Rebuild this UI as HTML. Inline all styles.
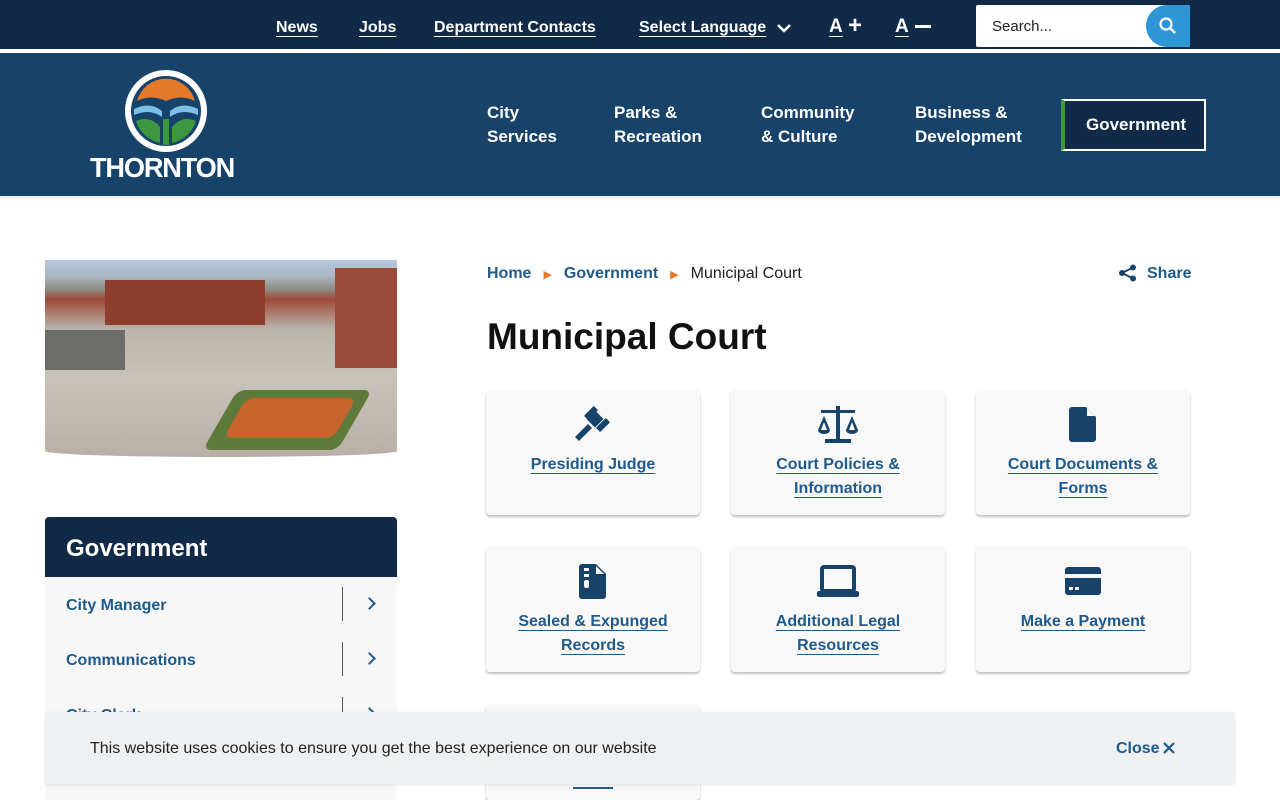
<!DOCTYPE html>
<html><head><style>
*{margin:0;padding:0;box-sizing:border-box}
html,body{width:1280px;height:800px;overflow:hidden}
body{font-family:"Liberation Sans",sans-serif;background:#fff;position:relative}
a{color:inherit}
.top{position:absolute;left:0;top:0;width:1280px;height:51px;background:#112a48;border-bottom:2px solid #fff}
.top a{position:absolute;top:19px;color:#fff;font-weight:bold;font-size:16px;text-decoration:underline;text-underline-offset:4px}
.hdr{position:absolute;left:0;top:53px;width:1280px;height:143px;background:#17426a}
.nav{position:absolute;color:#fff;font-weight:bold;font-size:17px;line-height:24px}
.card{position:absolute;width:214px;height:125px;background:#f8f8f9;border-radius:4px;box-shadow:0 2px 2px rgba(0,0,0,.25);text-align:center;color:#1f5a8c;font-size:16px;font-weight:bold;line-height:24px}
.card svg{display:block;margin:14px auto 9px}
.card span{text-decoration:underline;text-underline-offset:4px}
.side{position:absolute;left:45px;width:352px;height:55px;background:#f7f7f7}
.side a{position:absolute;left:21px;top:20px;color:#1f5a8c;font-weight:bold;font-size:16px;text-underline-offset:4px}
.side i{position:absolute;left:297px;top:10px;width:1px;height:34px;background:#555}
.side b{position:absolute;left:320px;top:22px;width:9px;height:9px;border-top:2px solid #1f5a8c;border-right:2px solid #1f5a8c;transform:rotate(45deg)}
</style></head><body>
<div class="top">
<a style="left:276px">News</a><a style="left:359px">Jobs</a><a style="left:434px">Department Contacts</a><a style="left:639px">Select Language</a>
<svg style="position:absolute;left:776px;top:23px" width="16" height="10"><path d="M2 2l6 6 6-6" stroke="#fff" stroke-width="2.5" fill="none"/></svg>
<a style="left:829px;font-size:19px;top:16px">A</a><span style="position:absolute;left:848px;top:12px;color:#fff;font-size:24px;font-weight:bold">+</span>
<a style="left:895px;font-size:19px;top:16px">A</a><span style="position:absolute;left:915px;top:25px;width:16px;height:3px;background:#fff"></span>
<div style="position:absolute;left:976px;top:5px;width:214px;height:42px;background:#fff;border-radius:2px"><span style="position:absolute;left:16px;top:13px;font-size:15px;color:#222">Search...</span>
<div style="position:absolute;right:0;top:0;width:44px;height:42px;background:#2f96d6;border-radius:21px 2px 2px 21px"><svg style="position:absolute;left:13px;top:12px" width="18" height="18"><circle cx="7" cy="7" r="5.5" stroke="#fff" stroke-width="2.2" fill="none"/><path d="M11 11l5 5" stroke="#fff" stroke-width="2.5"/></svg></div></div>
</div>
<div class="hdr">
<svg style="position:absolute;left:124px;top:16px" width="84" height="84" viewBox="0 0 84 84"><circle cx="42" cy="42" r="41" fill="#fff"/><circle cx="42" cy="42" r="35" fill="#17426a"/><path d="M13 32a30 30 0 0 1 58 0q-14-7-29 0q-15-7-29 0z" fill="#e5792a"/><path d="M10 40q16-8 28 2v6q-12-9-28-2zM74 40q-16-8-28 2v6q12-9 28-2z" fill="#7cc0e8"/><path d="M12 52q14-6 24 6v16a32 32 0 0 1-24-22zM72 52q-14-6-24 6v16a32 32 0 0 0 24-22zM39 50h6v26h-6z" fill="#3d9740"/></svg>
<div style="position:absolute;left:90px;top:99px;color:#fff;font-weight:bold;font-size:28px;letter-spacing:-1.2px;transform:scaleX(0.97);transform-origin:left">THORNTON</div>
<div class="nav" style="left:487px;top:48px">City<br>Services</div>
<div class="nav" style="left:614px;top:48px">Parks &amp;<br>Recreation</div>
<div class="nav" style="left:761px;top:48px">Community<br>&amp; Culture</div>
<div class="nav" style="left:915px;top:48px">Business &amp;<br>Development</div>
<div style="position:absolute;left:1061px;top:46px;width:145px;height:52px;border:2px solid #fff;background:#112a48;color:#fff;font-weight:bold;font-size:17px;line-height:48px;padding-left:21px;border-left:4px solid #3d9740">Government</div>
</div>
<div style="position:absolute;left:0;top:196px;width:1280px;height:4px;background:linear-gradient(#e6e6e6,#fff)"></div>
<div style="position:absolute;left:45px;top:260px;width:352px;height:197px;overflow:hidden;background:linear-gradient(180deg,#b7c8de 0,#aab8c5 8%,#8d8a80 15%,#a04a38 20%,#b9b4ac 35%,#c7c2ba 60%,#b8b0a6 100%);border-radius:0 0 50% 50%/0 0 6px 6px">
<div style="position:absolute;left:290px;top:8px;width:62px;height:100px;background:#9a4a38"></div>
<div style="position:absolute;left:60px;top:20px;width:160px;height:45px;background:#8f3d2c"></div>
<div style="position:absolute;left:175px;top:130px;width:135px;height:60px;background:#5e7a3a;border-radius:8px;transform:skewX(-30deg)"></div>
<div style="position:absolute;left:190px;top:138px;width:110px;height:40px;background:#c7642b;border-radius:8px;transform:skewX(-30deg)"></div>
<div style="position:absolute;left:0;top:70px;width:80px;height:40px;background:#6c6c68"></div>
</div>
<div style="position:absolute;left:45px;top:517px;width:352px;height:60px;background:#112a48;border-radius:4px 4px 0 0;color:#fff;font-weight:bold;font-size:24px;line-height:64px;padding-left:21px">Government</div>
<div class="side" style="top:577px"><a>City Manager</a><i></i><b></b></div>
<div class="side" style="top:632px"><a>Communications</a><i></i><b></b></div>
<div class="side" style="top:687px;height:113px"><a>City Clerk</a><i></i><b></b></div>
<div style="position:absolute;left:487px;top:265px;font-size:16px;color:#222"><a style="color:#1f5a8c;font-weight:bold;text-underline-offset:4px">Home</a><span style="color:#e5792a;margin:0 12px;font-size:11px">&#9654;</span><a style="color:#1f5a8c;font-weight:bold;text-underline-offset:4px">Government</a><span style="color:#e5792a;margin:0 12px;font-size:11px">&#9654;</span>Municipal Court</div>
<svg style="position:absolute;left:1118px;top:264px" width="20" height="18"><circle cx="15" cy="3.5" r="3" fill="#17426a"/><circle cx="4" cy="9" r="3" fill="#17426a"/><circle cx="15" cy="14.5" r="3" fill="#17426a"/><path d="M15 3.5L4 9l11 5.5" stroke="#17426a" stroke-width="2" fill="none"/></svg>
<a style="position:absolute;left:1147px;top:265px;color:#1f5a8c;font-weight:bold;font-size:16px;text-underline-offset:4px">Share</a>
<h1 style="position:absolute;left:487px;top:316px;font-size:37px;color:#111">Municipal Court</h1>
<div class="card" style="left:486px;top:390px"><svg width="40" height="40" viewBox="0 0 40 40"><g fill="#17426a"><rect x="15" y="2" width="6" height="14" rx="1" transform="rotate(45 18 9)"/><rect x="27" y="14" width="6" height="14" rx="1" transform="rotate(45 30 21)"/><rect x="16" y="9" width="12" height="12" transform="rotate(45 22 15)"/><path d="M15 20l4 4L6 37l-4-4z"/></g></svg><span>Presiding Judge</span></div>
<div class="card" style="left:731px;top:390px"><svg width="46" height="40" viewBox="0 0 46 40"><g fill="#17426a"><rect x="21" y="2" width="4" height="34"/><rect x="6" y="6" width="34" height="3"/><rect x="10" y="35" width="26" height="4"/><path d="M3 26l6-14 6 14a6 4 0 0 1-12 0zM31 26l6-14 6 14a6 4 0 0 1-12 0z"/></g><path d="M6 26l3-8 3 8zM34 26l3-8 3 8z" fill="#f8f8f9"/></svg><span>Court Policies &amp;<br>Information</span></div>
<div class="card" style="left:976px;top:390px"><svg width="30" height="40" viewBox="0 0 30 40"><path d="M4 3h14l10 10v22a3 3 0 0 1-3 3H4a3 3 0 0 1-3-3V6a3 3 0 0 1 3-3z" fill="#17426a"/><path d="M19 4l8 8h-8z" fill="#f8f8f9"/></svg><span>Court Documents &amp;<br>Forms</span></div>
<div class="card" style="left:486px;top:547px"><svg width="30" height="40" viewBox="0 0 30 40"><path d="M4 3h14l10 10v22a3 3 0 0 1-3 3H4a3 3 0 0 1-3-3V6a3 3 0 0 1 3-3z" fill="#17426a"/><path d="M18 5l8 8h-8z" fill="#f8f8f9"/><g fill="#f8f8f9"><rect x="6" y="7" width="5" height="3"/><rect x="6" y="13" width="5" height="3"/><rect x="6" y="19" width="5" height="8" rx="2"/></g></svg><span>Sealed &amp; Expunged<br>Records</span></div>
<div class="card" style="left:731px;top:547px"><svg width="46" height="40" viewBox="0 0 46 40"><rect x="7" y="6" width="32" height="24" rx="2" fill="none" stroke="#17426a" stroke-width="4"/><rect x="2" y="30" width="42" height="6" rx="2" fill="#17426a"/></svg><span>Additional Legal<br>Resources</span></div>
<div class="card" style="left:976px;top:547px"><svg width="40" height="40" viewBox="0 0 40 40"><rect x="2" y="6" width="36" height="28" rx="3" fill="#17426a"/><rect x="2" y="13" width="36" height="4" fill="#f8f8f9"/><rect x="6" y="26" width="4" height="3" fill="#f8f8f9"/><rect x="12" y="26" width="4" height="3" fill="#f8f8f9"/></svg><span>Make a Payment</span></div>
<div class="card" style="left:486px;top:704px;height:96px"><span style="position:absolute;left:87px;top:62px;width:40px;height:2px;background:#1f5a8c;top:83px"></span></div>
<div style="position:absolute;left:45px;top:712px;width:1190px;height:72px;background:#eef0f2;border-radius:3px;box-shadow:0 1px 3px rgba(0,0,0,.1)">
<span style="position:absolute;left:45px;top:28px;font-size:16px;color:#222">This website uses cookies to ensure you get the best experience on our website</span>
<a style="position:absolute;left:1071px;top:28px;font-size:16px;font-weight:bold;color:#1f5a8c;text-underline-offset:4px">Close</a>
<svg style="position:absolute;left:1118px;top:30px" width="12" height="12"><path d="M1 1l10 10M11 1L1 11" stroke="#1f5a8c" stroke-width="2.2"/></svg>
</div>
</body></html>
